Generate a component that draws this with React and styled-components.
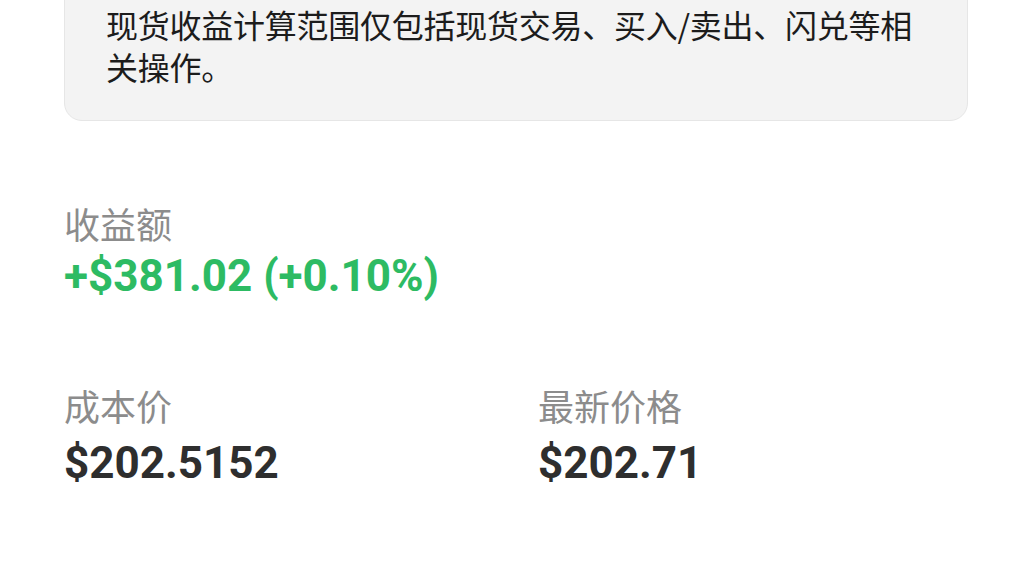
import React from "react";
import styled, { createGlobalStyle } from "styled-components";

const GlobalStyle = createGlobalStyle`
  html, body {
    margin: 0;
    padding: 0;
    background: #ffffff;
  }
  body {
    font-family: Roboto, "Noto Sans CJK SC", sans-serif;
    -webkit-font-smoothing: antialiased;
  }
`;

const Page = styled.div`
  width: 1032px;
  height: 580px;
  overflow: hidden;
  box-sizing: border-box;
  padding: 0 64px;
`;

// page is scrolled a bit, so the top of the note is cut off
const Scroller = styled.div`
  margin-top: -40px;
`;

const Note = styled.div`
  background: #f3f3f3;
  border: 1px solid #e6e6e6;
  border-radius: 18px;
  padding: 42px 40px 33px 41px;
  font-family: "Noto Sans CJK SC", sans-serif;
  font-size: 32px;
  letter-spacing: -0.25px;
  line-height: 42px;
  color: #1c1c1c;
`;

const Stats = styled.div`
  display: grid;
  grid-template-columns: 1fr 1fr;
  column-gap: 44px;
  row-gap: 76px;
  margin-top: 77px;
`;

const Stat = styled.div`
  grid-column: ${(p) => (p.$wide ? "1 / -1" : "auto")};
  display: flex;
  flex-direction: column;
`;

const Label = styled.div`
  font-family: "Noto Sans CJK SC", sans-serif;
  font-size: 36px;
  line-height: 50px;
  color: #8c8c8c;
`;

const Value = styled.div`
  font-family: Roboto, "Noto Sans CJK SC", sans-serif;
  font-weight: 700;
  font-size: 44px;
  line-height: 56px;
  color: ${(p) => (p.$up ? "#2dbb63" : "#2e2e2e")};
  margin-top: ${(p) => (p.$up ? "0" : "5px")};
`;

const stats = [
  { label: "收益额", value: "+$381.02 (+0.10%)", up: true, wide: true },
  { label: "成本价", value: "$202.5152" },
  { label: "最新价格", value: "$202.71" },
];

export default function App() {
  return (
    <>
      <GlobalStyle />
      <Page>
        <Scroller>
          <Note>
            现货收益计算范围仅包括现货交易、买入/卖出、闪兑等相关操作。
          </Note>
          <Stats>
            {stats.map((s) => (
              <Stat key={s.label} $wide={s.wide}>
                <Label>{s.label}</Label>
                <Value $up={s.up}>{s.value}</Value>
              </Stat>
            ))}
          </Stats>
        </Scroller>
      </Page>
    </>
  );
}
